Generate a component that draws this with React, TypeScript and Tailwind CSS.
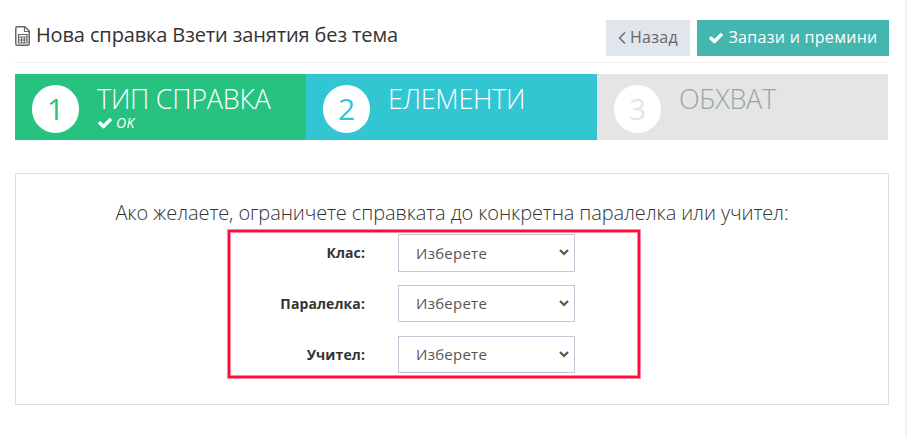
import React, { useState } from 'react';

function CheckIcon({ className }: { className?: string }) {
  return (
    <svg viewBox="0 0 1792 1792" fill="currentColor" className={className}>
      <path d="M1671 566q0 40-28 68l-724 724-136 136q-28 28-68 28t-68-28l-136-136-362-362q-28-28-28-68t28-68l136-136q28-28 68-28t68 28l294 295 656-657q28-28 68-28t68 28l136 136q28 28 28 68z" />
    </svg>
  );
}

function ReportIcon() {
  return (
    <svg viewBox="0 0 15 20" fill="none" stroke="#666" className="w-[15px] h-5 shrink-0">
      <path d="M2.25 .75h7.5L14.25 5v12.75q0 1.5-1.5 1.5H2.25q-1.5 0-1.5-1.5V2.25q0-1.5 1.5-1.5z" strokeWidth="1.5" />
      <path d="M9.5 1v4.5H14" strokeWidth="1.2" />
      <path d="M3.5 8.5h8.5v8.5h-8.5zM3.5 11h8.5M3.5 14h8.5M6.5 11v6M9.3 11v6" strokeWidth="1.2" />
    </svg>
  );
}

const steps = [
  {
    number: 1,
    title: 'ТИП СПРАВКА',
    done: true,
    box: 'bg-[#27c180] text-white',
    digit: 'text-[#27c180]'
  },
  {
    number: 2,
    title: 'ЕЛЕМЕНТИ',
    done: false,
    box: 'bg-[#32c5d2] text-white',
    digit: 'text-[#32c5d2]'
  },
  {
    number: 3,
    title: 'ОБХВАТ',
    done: false,
    box: 'bg-[#e5e5e5] text-[#95a5a6]',
    digit: 'text-[#e5e5e5]'
  }
];

const fields = [
  { id: 'grade', label: 'Клас:', size: 'h-[38px]' },
  { id: 'class', label: 'Паралелка:', size: 'h-[37px] mt-[13px]' },
  { id: 'teacher', label: 'Учител:', size: 'h-[37px] mt-[14px]' }
];

export default function App() {
  const [values, setValues] = useState<Record<string, string>>({});

  return (
    <div className="h-[436px] bg-white border-r-2 border-[#f1f1f1] pl-[15px] pr-4 pt-5 font-['Open_Sans',sans-serif] text-[#333] overflow-hidden">
      {/* Page title and actions */}
      <header className="flex justify-between h-[43px] border-b border-[#eee]">
        <div className="flex h-[31px] items-center gap-1.5">
          <ReportIcon />
          <h1 className="pb-[2px] text-[20px] leading-[28px] tracking-[-0.13px] whitespace-nowrap">Нова справка Взети занятия без тема</h1>
        </div>
        <div className="flex gap-[7px] text-[16px] whitespace-nowrap">
          <button className="flex h-9 w-[84px] items-center justify-center gap-1 bg-[#e1e5ec] pb-[2px] tracking-[0.3px] text-[#666]">
            <svg viewBox="0 0 8 14" fill="none" stroke="currentColor" strokeWidth="1.4" className="w-2 h-3.5 mt-[2px]">
              <path d="M7 1.5 1.5 7 7 12.5" />
            </svg>
            Назад
          </button>
          <button className="flex h-9 w-48 items-center justify-center gap-1 bg-[#44b6ae] pb-[2px] tracking-[0.3px] text-white">
            <CheckIcon className="w-4 h-4 mt-[2px]" />
            Запази и премини
          </button>
        </div>
      </header>

      {/* Wizard steps */}
      <div className="mt-[11px] flex">
        {steps.map((step) => (
          <div key={step.number} className={`flex h-[66px] w-[291px] pl-[17px] pt-[11px] ${step.box}`}>
            <div className={`flex h-12 w-[47px] items-center justify-center rounded-full bg-white text-[30px] leading-none ${step.digit}`}>
              {step.number}
            </div>
            <div className="ml-[18px]">
              <div className="pb-[2px] text-[27px] leading-[27px] font-light tracking-[-0.28px] whitespace-nowrap">{step.title}</div>
              {step.done && (
                <div className="flex items-center gap-[3px] text-[14px] leading-[18px] tracking-[0.4px] italic">
                  <CheckIcon className="w-4 h-4" />
                  OK
                </div>
              )}
            </div>
          </div>
        ))}
      </div>

      {/* Filter form */}
      <section className="mt-[33px] h-[232px] w-[874px] border border-[#ddd]">
        <p className="mt-6 text-center text-[20px] leading-[30px] font-light tracking-[-0.1px] whitespace-nowrap">
          Ако желаете, ограничете справката до конкретна паралелка или учител:
        </p>
        <div className="ml-[212px] mt-[2px] h-[148px] w-[412px] border-2 border-[#ff0a3c] pt-[2px] shadow-[0_0_0_1px_#ff0a3c80,inset_0_0_0_1px_#ff0a3c80]">
          {fields.map((field) => (
            <div key={field.id} className={`flex items-center ${field.size}`}>
              <label htmlFor={field.id} className="w-[135px] pb-px text-right text-[14px] font-bold tracking-[0.1px]">
                {field.label}
              </label>
              <div className="relative ml-[33px] h-full w-[177px]">
                <select
                  id={field.id}
                  value={values[field.id] ?? ''}
                  onChange={(e) => setValues({ ...values, [field.id]: e.target.value })}
                  className="h-full w-full appearance-none border border-[#c2cad8] bg-white pl-[17px] text-[15px] tracking-[0.25px] text-[#555]"
                >
                  <option value="">Изберете</option>
                </select>
                <svg viewBox="0 0 10 7" fill="none" stroke="#555" strokeWidth="2.2" className="pointer-events-none absolute right-[6px] top-[15px] h-[7px] w-[10px]">
                  <path d="M1 1l4 4 4-4" />
                </svg>
              </div>
            </div>
          ))}
        </div>
      </section>
    </div>
  );
}
